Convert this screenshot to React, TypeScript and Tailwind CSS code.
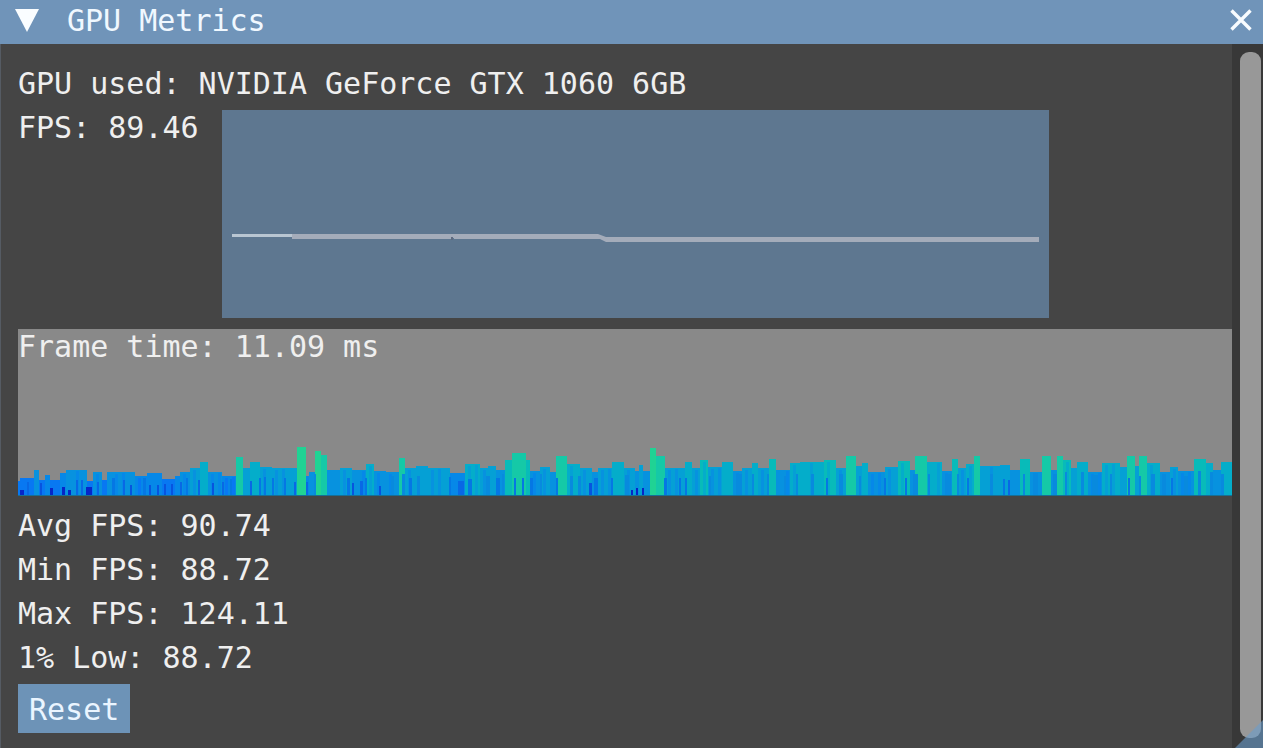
import React, { useState } from "react";

// [start, end, height] of each run of bars, in graph units
const runs: [number, number, number][] = [
  [0, 2, 15], [2, 16, 18], [16, 21, 26], [21, 27, 16], [27, 32, 21], [32, 42, 16], [42, 48, 23], [48, 69, 26],
  [69, 75, 15], [75, 84, 24], [84, 89, 16], [89, 94, 24], [94, 117, 24], [117, 129, 20], [129, 144, 23],
  [144, 157, 17], [157, 162, 20], [162, 172, 24], [172, 182, 28], [182, 190, 34], [190, 204, 24], [204, 218, 20],
  [218, 225, 39], [225, 232, 28], [232, 242, 34], [242, 254, 29], [254, 279, 28], [279, 288, 49], [288, 291, 20],
  [291, 297, 24], [297, 303, 45], [303, 309, 41], [309, 322, 26], [322, 334, 28], [334, 348, 26], [348, 356, 32],
  [356, 368, 25], [368, 381, 24], [381, 387, 38], [387, 398, 28], [398, 410, 30], [410, 432, 28], [432, 447, 23],
  [447, 462, 32], [462, 470, 28], [470, 478, 30], [478, 487, 26], [487, 494, 36], [494, 508, 43], [508, 512, 36],
  [512, 522, 25], [522, 532, 29], [532, 538, 24], [538, 549, 40], [549, 562, 32], [562, 574, 28], [574, 580, 24],
  [580, 594, 28], [594, 606, 34], [606, 617, 28], [617, 621, 25], [621, 625, 31], [625, 632, 25], [632, 638, 48],
  [638, 647, 40], [647, 667, 28], [667, 674, 34], [674, 682, 28], [682, 690, 36], [690, 704, 29], [704, 715, 34],
  [715, 724, 25], [724, 734, 28], [734, 740, 33], [740, 751, 28], [751, 758, 37], [758, 772, 26], [772, 782, 33],
  [782, 806, 34], [806, 818, 36], [818, 828, 28], [828, 838, 40], [838, 844, 30], [844, 850, 33], [850, 867, 24],
  [867, 880, 29], [880, 892, 35], [892, 897, 26], [897, 909, 40], [909, 924, 34], [924, 934, 25], [934, 940, 37],
  [940, 948, 28], [948, 956, 32], [956, 962, 40], [962, 982, 30], [982, 992, 31], [992, 1002, 26], [1002, 1012, 37],
  [1012, 1024, 24], [1024, 1033, 40], [1033, 1039, 26], [1039, 1045, 40], [1045, 1053, 36], [1053, 1059, 28],
  [1059, 1070, 34], [1070, 1084, 24], [1084, 1102, 33], [1102, 1109, 29], [1109, 1117, 40], [1117, 1121, 30],
  [1121, 1129, 40], [1129, 1142, 33], [1142, 1152, 24], [1152, 1160, 29], [1160, 1176, 25], [1176, 1188, 37],
  [1188, 1195, 33], [1195, 1203, 26], [1203, 1214, 34],
];

// Short frames in front of the runs: [x, width, height]
const dips: [number, number, number][] = [
  [2, 4, 6], [32, 3, 8], [44, 3, 9], [50, 3, 6], [68, 6, 9], [9, 2, 14], [22, 2, 13], [58, 2, 16], [63, 2, 16],
  [79, 2, 14], [94, 3, 18], [105, 2, 16], [112, 2, 11], [125, 3, 18], [131, 2, 11], [139, 2, 11], [146, 2, 12],
  [153, 2, 12], [162, 2, 14], [168, 2, 18], [180, 2, 16], [194, 2, 13], [204, 2, 14], [212, 2, 17], [232, 2, 15],
  [241, 2, 18], [246, 2, 19], [254, 2, 18], [266, 2, 18], [276, 2, 14], [288, 2, 14], [296, 2, 22], [329, 3, 18],
  [334, 2, 13], [342, 3, 15], [347, 2, 18], [361, 2, 10], [373, 3, 20], [384, 3, 22], [391, 3, 18], [399, 3, 20],
  [431, 2, 19], [440, 6, 15], [450, 4, 17], [468, 4, 20], [478, 4, 18], [484, 2, 22], [496, 2, 18], [504, 2, 18],
  [512, 3, 18], [522, 2, 22], [538, 2, 18], [552, 3, 20], [560, 3, 20], [571, 3, 13], [576, 4, 18], [593, 2, 18],
  [607, 4, 21], [613, 2, 6], [618, 2, 8], [624, 2, 8], [646, 3, 18], [661, 2, 18], [667, 2, 18], [691, 2, 20],
  [718, 6, 22], [734, 2, 22], [749, 2, 22], [766, 2, 20], [778, 2, 22], [793, 3, 22], [808, 2, 18], [821, 4, 22],
  [841, 2, 20], [866, 2, 18], [887, 2, 18], [895, 5, 22], [910, 2, 22], [927, 6, 22], [939, 2, 22], [949, 2, 18],
  [972, 3, 22], [985, 2, 17], [990, 2, 16], [1005, 2, 22], [1015, 5, 23], [1035, 4, 22], [1047, 2, 24],
  [1063, 3, 24], [1074, 6, 21], [1092, 2, 22], [1110, 2, 18], [1121, 2, 20], [1133, 4, 22], [1144, 4, 22],
  [1153, 2, 18], [1166, 4, 20], [1180, 3, 25], [1192, 3, 24], [1203, 3, 22],
];

function runColor(h: number) {
  if (h >= 44) return "#20d394";
  if (h >= 38) return "#15c9a7";
  if (h >= 35) return "#08bbb9";
  if (h >= 32) return "#04adca";
  if (h >= 28) return "#05a0d5";
  if (h >= 24) return "#0792df";
  if (h >= 20) return "#0688e8";
  return "#0878f2";
}

function dipColor(h: number) {
  if (h < 10) return "#0626c8";
  if (h < 14) return "#0754df";
  if (h < 17) return "#0868e5";
  if (h < 20) return "#0577e4";
  return "#088ade";
}

function FrameTimeGraph() {
  return (
    <svg
      className="block h-[167px] w-full"
      viewBox="0 0 1214 167"
      preserveAspectRatio="none"
      shapeRendering="crispEdges"
      aria-hidden="true"
    >
      {runs.map(([a, b, h]) => (
        <g key={a}>
          <rect x={a} y={167 - h} width={b - a} height={h} fill={runColor(h)} />
          {b - a > 7 && (
            <rect x={a + 3} y={169 - h} width={3} height={h - 2} fill={runColor(h - 2)} />
          )}
          {b - a > 13 && (
            <rect x={a + 10} y={168 - h} width={3} height={h - 1} fill={runColor(h - 3)} />
          )}
        </g>
      ))}
      {dips.map(([x, w, h]) => (
        <rect key={x} x={x} y={167 - h} width={w} height={h} fill={dipColor(h)} />
      ))}
      <rect x={0} y={166} width={1214} height={1} fill="#176f96" />
    </svg>
  );
}

function FpsGraph() {
  return (
    <svg
      className="block h-[208px] max-w-[827px] grow bg-[#5e7790]"
      viewBox="0 0 827 208"
      preserveAspectRatio="none"
      aria-hidden="true"
    >
      <path
        d="M10 124H376L384 127H817V132H384L378 129H232V128H230V129H70V127H10Z"
        fill="#a4acba"
      />
      <path d="M10 124H70V127H10Z" fill="#b9c6d2" />
      <path d="M229 127H231V130H229Z" fill="#5e6b80" />
    </svg>
  );
}

export default function App() {
  const [open, setOpen] = useState(true);
  return (
    <main className="flex min-h-screen flex-col bg-[#454545] font-['DejaVu_Sans_Mono',monospace] text-[30px] leading-[36px] text-[#efefef]">
      <header className="flex h-11 items-center bg-[#7094b9] pr-[11px] pl-[15px] text-[#f0f8ff]">
        <button type="button" aria-label="Collapse" onClick={() => setOpen(!open)} className="mr-7 pb-1">
          <svg className="block h-[23px] w-6" viewBox="0 0 24 23" aria-hidden="true">
            <path d="M0 0H24L12 23Z" fill="#fafdff" />
          </svg>
        </button>
        <h1 className="grow pb-0.5">GPU Metrics</h1>
        <button type="button" aria-label="Close" className="pb-1">
          <svg className="block size-[22px]" viewBox="0 0 22 22" aria-hidden="true">
            <path d="M1.5 1.5L20.5 20.5M20.5 1.5L1.5 20.5" stroke="#f8fcff" strokeWidth="3.4" />
          </svg>
        </button>
      </header>
      {open && (
        <div className="relative flex grow">
          <section className="flex min-w-0 grow flex-col gap-2 border-l border-[#555b63] pt-[22px] pb-[15px] pl-[17px]">
            <p>GPU used: NVIDIA GeForce GTX 1060 6GB</p>
            <div className="flex gap-[23px] pb-[3px]">
              <p className="shrink-0">FPS: 89.46</p>
              <FpsGraph />
            </div>
            <div className="pb-1">
              <div className="grid bg-[#898989]">
                <p className="z-10 col-start-1 row-start-1">Frame time: 11.09 ms</p>
                <div className="col-start-1 row-start-1">
                  <FrameTimeGraph />
                </div>
              </div>
            </div>
            <p>Avg FPS: 90.74</p>
            <p>Min FPS: 88.72</p>
            <p>Max FPS: 124.11</p>
            <p>1% Low: 88.72</p>
            <button type="button" className="h-[49px] self-start bg-[#6d93b7] px-[11px] pt-0.5 text-[#eaf5ff]">
              Reset
            </button>
          </section>
          <div className="flex w-[31px] shrink-0 bg-[#383838] pt-2 pr-0.5 pb-[10px] pl-2">
            <div className="grow rounded-[9px] bg-[#989898]" />
          </div>
          <svg className="absolute right-0 bottom-0 h-7 w-7" viewBox="0 0 28 28" aria-hidden="true">
            <path d="M28 0V28H0Z" fill="#6a9ccb" fillOpacity="0.6" />
          </svg>
        </div>
      )}
    </main>
  );
}
